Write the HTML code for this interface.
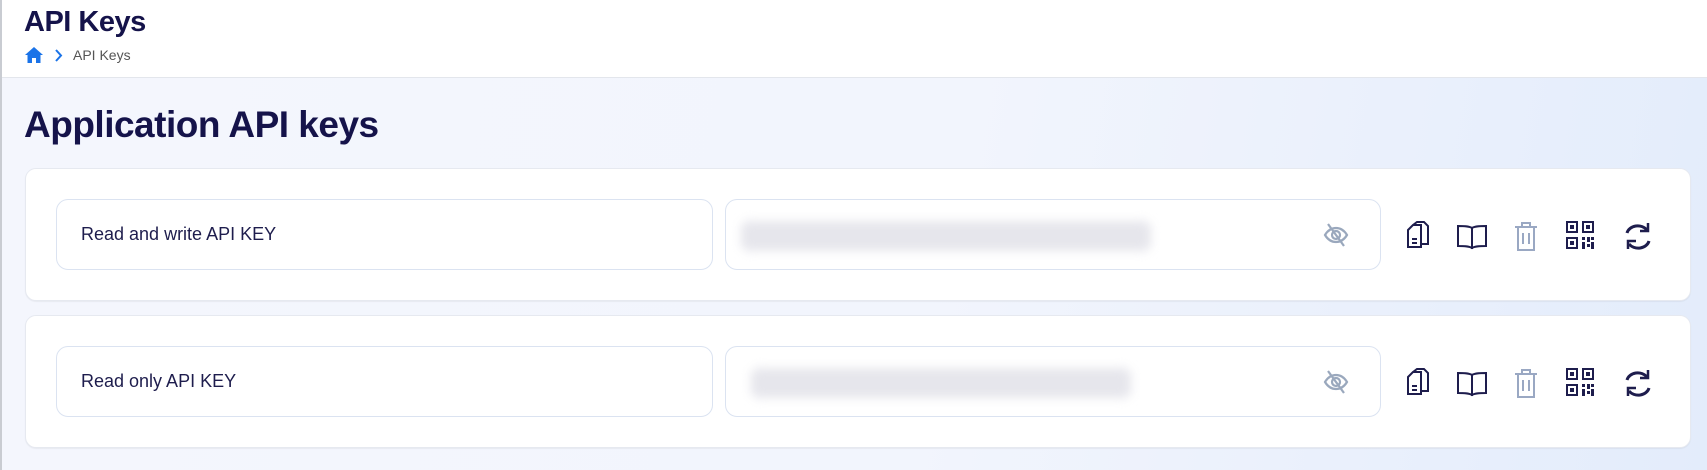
<!DOCTYPE html>
<html><head><meta charset="utf-8"><style>
*{box-sizing:border-box;margin:0;padding:0}
body{width:1707px;height:470px;overflow:hidden;font-family:"Liberation Sans",sans-serif;background:linear-gradient(100deg,#f4f6fd 0%,#f2f5fd 55%,#e3ecfb 100%);position:relative;border-left:2px solid #c9ccd2}
.hdr{position:absolute;left:0;top:0;width:1707px;height:78px;background:#fff;border-bottom:1px solid #e3e6ec}
.h1{position:absolute;left:22px;top:6px;font-size:29px;font-weight:bold;color:#15134a;letter-spacing:-0.5px}
.bc{position:absolute;left:71px;top:47px;font-size:14px;color:#555}
.title{position:absolute;left:22px;top:104px;font-size:37px;font-weight:bold;color:#15134a;letter-spacing:-0.5px}
.card{position:absolute;left:23px;width:1666px;height:133px;background:#fff;border:1px solid #e6e9f0;border-radius:11px;box-shadow:0 1px 1px rgba(0,0,0,.05)}
.in{position:absolute;height:71px;border:1px solid #dbe3f1;border-radius:12px;background:#fff}
.lbl{left:30px;width:657px;font-size:18px;color:#1e1d4d;line-height:69px;padding-left:24px}
.key{left:699px;width:656px}
.blur{position:absolute;left:15px;top:21px;height:30px;background:#e6e6ec;filter:blur(5px);border-radius:8px}
.ic{position:absolute}
</style></head><body>
<div class="hdr">
<div class="h1">API Keys</div>
<svg style="position:absolute;left:23px;top:47px" width="18" height="16" viewBox="0 0 18 16"><path d="M9 0L0 8h2.5v8h4.5v-5h4v5h4.5V8H18z" fill="#1a73e8"/></svg>
<svg style="position:absolute;left:52px;top:49px" width="9" height="13" viewBox="0 0 9 13"><path d="M2 1l5 5.5L2 12" fill="none" stroke="#1a73e8" stroke-width="2"/></svg>
<div class="bc">API Keys</div>
</div>
<div class="title">Application API keys</div>

<div class="card" style="top:168px">
<div class="in lbl" style="top:30px">Read and write API KEY</div>
<div class="in key" style="top:30px"><div class="blur" style="width:410px"></div>
<svg class="ic" style="left:597px;top:22px" width="26" height="26" viewBox="0 0 26 26" fill="none" stroke="#9aa8bd" stroke-width="2.2"><path d="M2 13c3-5 7-7 11-7s8 2 11 7c-3 5-7 7-11 7s-8-2-11-7z"/><circle cx="13" cy="13" r="4"/><path d="M5 2l16 22"/></svg>
</div>
<svg class="ic" style="left:1377px;top:51px" width="30" height="30" viewBox="0 0 30 30" fill="none" stroke="#1e1d4d" stroke-width="2"><path d="M5 10l5-5h8v22H5z"/><path d="M10 5l4-3h7l4 4v18h-7"/><path d="M9 19h5M9 23h5"/></svg>
<svg class="ic" style="left:1430px;top:53px" width="32" height="30" viewBox="0 0 32 30" fill="none" stroke="#1e1d4d" stroke-width="2"><path d="M16 6C13 4 7 4 2 4v20c5 0 11 0 14 2 3-2 9-2 14-2V4c-5 0-11 0-14 2zM16 6v21"/></svg>
<svg class="ic" style="left:1486px;top:51px" width="28" height="32" viewBox="0 0 28 32" fill="none" stroke="#9aa8c3" stroke-width="2"><path d="M3 7h22M10 7V3h8v4M6 7v23h16V7M11 13v11M17 13v11"/></svg>
<svg class="ic" style="left:1539px;top:51px" width="30" height="30" viewBox="0 0 30 30" fill="#1e1d4d"><path d="M1 1h12v12H1zM3 3v8h8V3zM5 5h4v4H5zM17 1h12v12H17zM19 3v8h8V3zM21 5h4v4h-4zM1 17h12v12H1zM3 19v8h8v-8zM5 21h4v4H5zM17 17h3v3h-3zM22 17h3v5h-3zM26 17h3v3h-3zM17 22h3v7h-3zM22 24h3v3h-3zM26 22h3v7h-3z"/></svg>
<svg class="ic" style="left:1596px;top:52px" width="32" height="30" viewBox="0 0 32 30" fill="none" stroke="#1e1d4d" stroke-width="3"><path d="M5 12a11 9 0 0 1 20-3"/><path d="M27 20a11 9 0 0 1-20 3"/><path d="M26 2v8h-8" stroke-width="2.5"/><path d="M6 28v-8h8" stroke-width="2.5"/></svg>
</div>

<div class="card" style="top:315px">
<div class="in lbl" style="top:30px">Read only API KEY</div>
<div class="in key" style="top:30px"><div class="blur" style="left:25px;width:380px"></div>
<svg class="ic" style="left:597px;top:22px" width="26" height="26" viewBox="0 0 26 26" fill="none" stroke="#9aa8bd" stroke-width="2.2"><path d="M2 13c3-5 7-7 11-7s8 2 11 7c-3 5-7 7-11 7s-8-2-11-7z"/><circle cx="13" cy="13" r="4"/><path d="M5 2l16 22"/></svg>
</div>
<svg class="ic" style="left:1377px;top:51px" width="30" height="30" viewBox="0 0 30 30" fill="none" stroke="#1e1d4d" stroke-width="2"><path d="M5 10l5-5h8v22H5z"/><path d="M10 5l4-3h7l4 4v18h-7"/><path d="M9 19h5M9 23h5"/></svg>
<svg class="ic" style="left:1430px;top:53px" width="32" height="30" viewBox="0 0 32 30" fill="none" stroke="#1e1d4d" stroke-width="2"><path d="M16 6C13 4 7 4 2 4v20c5 0 11 0 14 2 3-2 9-2 14-2V4c-5 0-11 0-14 2zM16 6v21"/></svg>
<svg class="ic" style="left:1486px;top:51px" width="28" height="32" viewBox="0 0 28 32" fill="none" stroke="#9aa8c3" stroke-width="2"><path d="M3 7h22M10 7V3h8v4M6 7v23h16V7M11 13v11M17 13v11"/></svg>
<svg class="ic" style="left:1539px;top:51px" width="30" height="30" viewBox="0 0 30 30" fill="#1e1d4d"><path d="M1 1h12v12H1zM3 3v8h8V3zM5 5h4v4H5zM17 1h12v12H17zM19 3v8h8V3zM21 5h4v4h-4zM1 17h12v12H1zM3 19v8h8v-8zM5 21h4v4H5zM17 17h3v3h-3zM22 17h3v5h-3zM26 17h3v3h-3zM17 22h3v7h-3zM22 24h3v3h-3zM26 22h3v7h-3z"/></svg>
<svg class="ic" style="left:1596px;top:52px" width="32" height="30" viewBox="0 0 32 30" fill="none" stroke="#1e1d4d" stroke-width="3"><path d="M5 12a11 9 0 0 1 20-3"/><path d="M27 20a11 9 0 0 1-20 3"/><path d="M26 2v8h-8" stroke-width="2.5"/><path d="M6 28v-8h8" stroke-width="2.5"/></svg>
</div>
</body></html>
